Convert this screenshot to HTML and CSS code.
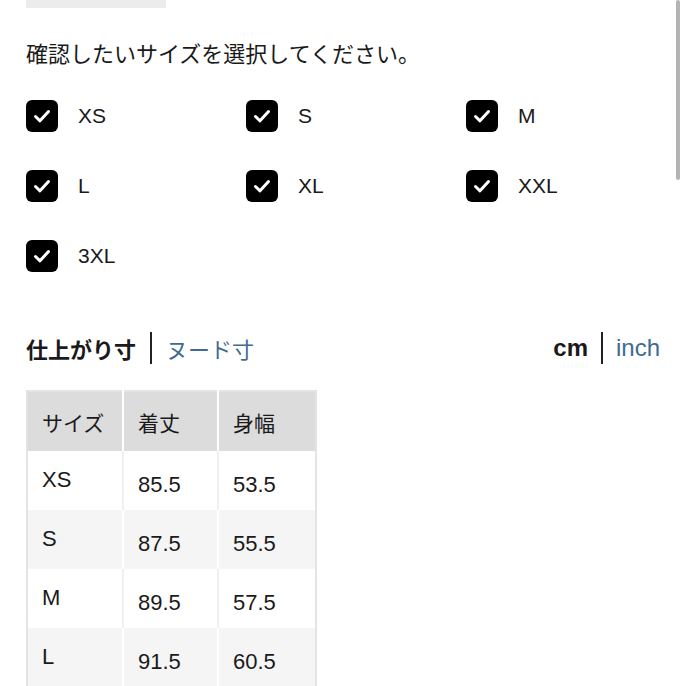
FILE: index.html
```html
<!DOCTYPE html>
<html lang="ja">
<head>
    <meta charset="UTF-8">
    <meta name="viewport" content="width=device-width, initial-scale=1.0">
    <title>サイズ表</title>
    <link rel="stylesheet" href="styles.css">
</head>
<body>
    <div class="scrollbar"></div>
    <div class="page">
        <div class="top-tab"></div>
        <p class="intro">確認したいサイズを選択してください。</p>
        <div class="size-grid">
            <label class="size-option"><svg class="check" viewBox="0 0 32 32"><rect width="32" height="32" rx="6"/><path d="M9.5 16.5l4.5 4.3 8.5-9.3"/></svg>XS</label>
            <label class="size-option"><svg class="check" viewBox="0 0 32 32"><rect width="32" height="32" rx="6"/><path d="M9.5 16.5l4.5 4.3 8.5-9.3"/></svg>S</label>
            <label class="size-option"><svg class="check" viewBox="0 0 32 32"><rect width="32" height="32" rx="6"/><path d="M9.5 16.5l4.5 4.3 8.5-9.3"/></svg>M</label>
            <label class="size-option"><svg class="check" viewBox="0 0 32 32"><rect width="32" height="32" rx="6"/><path d="M9.5 16.5l4.5 4.3 8.5-9.3"/></svg>L</label>
            <label class="size-option"><svg class="check" viewBox="0 0 32 32"><rect width="32" height="32" rx="6"/><path d="M9.5 16.5l4.5 4.3 8.5-9.3"/></svg>XL</label>
            <label class="size-option"><svg class="check" viewBox="0 0 32 32"><rect width="32" height="32" rx="6"/><path d="M9.5 16.5l4.5 4.3 8.5-9.3"/></svg>XXL</label>
            <label class="size-option"><svg class="check" viewBox="0 0 32 32"><rect width="32" height="32" rx="6"/><path d="M9.5 16.5l4.5 4.3 8.5-9.3"/></svg>3XL</label>
        </div>
        <div class="switch-row">
            <div class="switch">
                <span class="active">仕上がり寸</span>
                <span class="sep"></span>
                <span class="link">ヌード寸</span>
            </div>
            <div class="switch unit">
                <span class="active">cm</span>
                <span class="sep"></span>
                <span class="link">inch</span>
            </div>
        </div>
        <table class="size-table">
            <thead>
                <tr><th>サイズ</th><th>着丈</th><th>身幅</th></tr>
            </thead>
            <tbody>
                <tr><td>XS</td><td>85.5</td><td>53.5</td></tr>
                <tr><td>S</td><td>87.5</td><td>55.5</td></tr>
                <tr><td>M</td><td>89.5</td><td>57.5</td></tr>
                <tr><td>L</td><td>91.5</td><td>60.5</td></tr>
            </tbody>
        </table>
    </div>
</body>
</html>
```

FILE: styles.css
```css
body {
    margin: 0;
    overflow: hidden;
    background: #fff;
    color: #1a1a1a;
    font-family: "Liberation Sans", "Noto Sans CJK JP", sans-serif;
}
.page {
    padding: 0 26px;
}
.scrollbar {
    position: fixed;
    top: 0;
    right: 6px;
    width: 4px;
    height: 180px;
    background: #b4b4b4;
    border-radius: 2px;
}
.top-tab {
    width: 140px;
    height: 8px;
    background: #ececec;
}
.intro {
    margin: 29px 0 0;
    font-size: 22px;
    line-height: 30px;
    font-family: "Noto Sans CJK JP", sans-serif;
}
.size-grid {
    display: grid;
    grid-template-columns: repeat(3, 220px);
    grid-auto-rows: 70px;
    margin-top: 14px;
}
.size-option {
    display: flex;
    align-items: center;
    gap: 20px;
    font-size: 21px;
}
.check {
    width: 32px;
    height: 32px;
}
.check rect {
    fill: #000;
}
.check path {
    fill: none;
    stroke: #fff;
    stroke-width: 3;
    stroke-linecap: round;
    stroke-linejoin: round;
}
.switch-row {
    display: flex;
    justify-content: space-between;
    align-items: center;
    margin-top: 41px;
    width: 634px;
}
.switch {
    display: flex;
    align-items: center;
    gap: 14px;
    font-size: 22px;
    font-family: "Noto Sans CJK JP", sans-serif;
}
.switch .active {
    font-weight: bold;
}
.switch .link {
    color: #3f6b91;
}
.switch.unit {
    font-family: "Liberation Sans", sans-serif;
    font-size: 24px;
    gap: 13px;
}
.sep {
    width: 2px;
    height: 32px;
    background: #222;
}
.size-table {
    margin-top: 26px;
    border-collapse: collapse;
    border: 2px solid #e4e4e4;
    font-size: 22px;
}
.size-table th,
.size-table td {
    text-align: left;
    font-weight: normal;
    padding: 0 0 0 14px;
    border-left: 2px solid #f0f0f0;
}
.size-table th {
    width: 79px;
    height: 59px;
    background: #dcdcdc;
    border-left: 2px solid #fff;
    font-family: "Noto Sans CJK JP", sans-serif;
    font-size: 21px;
}
.size-table th:first-child {
    width: 80px;
    border-left: none;
}
.size-table th:last-child {
    width: 82px;
}
.size-table td {
    height: 51px;
    padding-top: 8px;
}
.size-table td:first-child {
    border-left: none;
    padding-top: 0;
    padding-bottom: 2px;
}
.size-table tbody tr:nth-child(even) td {
    background: #f5f5f5;
    border-left-color: #fff;
}
```
